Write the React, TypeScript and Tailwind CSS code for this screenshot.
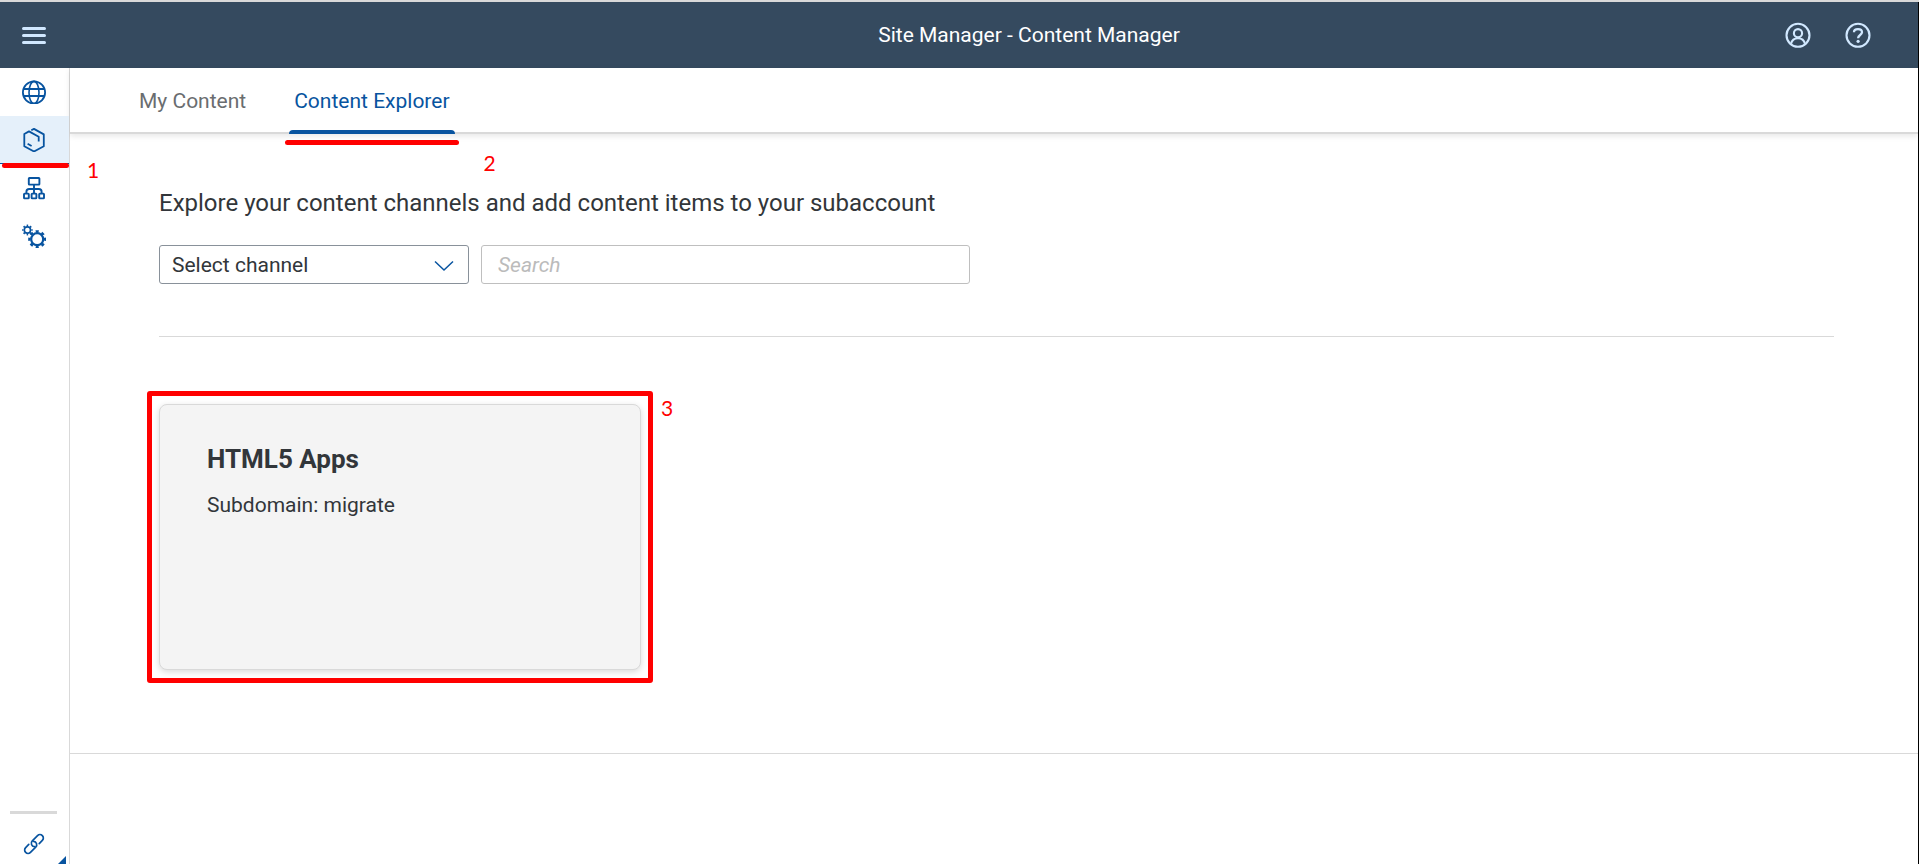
import React from "react";

type IconProps = { className?: string };

function GlobeIcon() {
  return (
    <svg viewBox="0 0 24 24" className="size-6" fill="none" stroke="currentColor" strokeWidth="1.8" aria-hidden="true">
      <circle cx="12" cy="12.5" r="11.1" />
      <ellipse cx="12" cy="12.5" rx="5" ry="11.1" strokeWidth="1.6" />
      <path d="M1.5 9h21M1.5 16h21" strokeWidth="2" />
    </svg>
  );
}

function ProductIcon() {
  return (
    <svg viewBox="0 0 24 24" className="size-6" fill="none" stroke="currentColor" strokeWidth="1.8" strokeLinejoin="round" aria-hidden="true">
      <path d="M9.3 2.3 12 .9l9.8 5.5v11.8L12 23.500l-9.700-5.300V6L7 3.400l9.700 5.400V13.600M5.600 15.800l4 2.200" />
    </svg>
  );
}

function HierarchyIcon() {
  return (
    <svg viewBox="0 0 24 24" className="size-6" fill="none" stroke="currentColor" strokeWidth="1.9" strokeLinejoin="round" aria-hidden="true">
      <rect x="6.800" y="2" width="10.600" height="6.600" rx=".6" />
      <path d="M12 8.600V18M4.400 18v-2.200c0-1.800 1-2.800 2.800-2.800h9.600c1.800 0 2.800 1 2.800 2.800V18" />
      <rect x="2" y="17.600" width="4.800" height="4.800" rx=".6" />
      <rect x="9.600" y="17.600" width="4.800" height="4.800" rx=".6" />
      <rect x="17.200" y="17.600" width="4.800" height="4.800" rx=".6" />
    </svg>
  );
}

function GearsIcon() {
  return (
    <svg viewBox="0 0 24 24" className="size-6" fill="none" stroke="currentColor" aria-hidden="true">
      <circle cx="5.400" cy="6" r="3.100" strokeWidth="1.600" />
      <circle cx="5.400" cy="6" r="4.500" strokeWidth="1.800" pathLength="80" strokeDasharray="4.400 5.600" strokeDashoffset="2.200" />
      <circle cx="15.200" cy="15.200" r="6" strokeWidth="2.200" />
      <circle cx="15.200" cy="15.200" r="7.800" strokeWidth="2.400" pathLength="80" strokeDasharray="5 5" strokeDashoffset="2.500" />
    </svg>
  );
}

function ChainIcon() {
  return (
    <svg viewBox="0 0 24 24" className="size-6" fill="none" stroke="currentColor" strokeWidth="1.700" strokeLinecap="round" aria-hidden="true">
      <g transform="translate(12 12) rotate(-45)">
        <path d="M4 3.400H8.400a3.400 3.400 0 0 0 0-6.800H1a3.400 3.400 0 0 0-2.600 5.600" />
        <path d="M-4-3.400H-8.400a3.400 3.400 0 0 0 0 6.800H-1a3.400 3.400 0 0 0 2.600-5.600" />
      </g>
    </svg>
  );
}

function MenuIcon() {
  return (
    <svg viewBox="0 0 24 24" className="size-6" stroke="currentColor" strokeWidth="3" strokeLinecap="round" aria-hidden="true">
      <path d="M1.5 5.5h21M1.5 12.5h21M1.5 19.5h21" />
    </svg>
  );
}

function UserIcon() {
  return (
    <svg viewBox="0 0 26 26" className="size-[26px]" fill="none" stroke="currentColor" strokeWidth="2.100" aria-hidden="true">
      <circle cx="13" cy="13.300" r="11.500" />
      <circle cx="13" cy="11.200" r="4.100" />
      <path d="M6 21.800c.8-3.400 3.300-5.600 7-5.600s6.200 2.200 7 5.600" />
    </svg>
  );
}

function HelpIcon() {
  return (
    <svg viewBox="0 0 26 26" className="size-[26px]" fill="none" stroke="currentColor" strokeWidth="2.100" aria-hidden="true">
      <circle cx="13" cy="13.300" r="11.500" />
      <path d="M9 10.200C9 8.300 10.600 7.200 13 7.200s4 1.200 4 3.100c0 2.600-3.900 2.900-3.900 5.900" strokeWidth="2.300" />
      <circle cx="13.100" cy="19.300" r="1.600" fill="currentColor" stroke="none" />
    </svg>
  );
}

function ChevronIcon({ className }: IconProps) {
  return (
    <svg viewBox="0 0 20 12" className={className} fill="none" stroke="currentColor" strokeWidth="1.500" aria-hidden="true">
      <path d="M1 1.500l9 8.500 9-8.500" />
    </svg>
  );
}

const navItems = [
  { label: "Site Directory", icon: <GlobeIcon /> },
  { label: "Content Manager", icon: <ProductIcon />, active: true },
  { label: "Channel Manager", icon: <HierarchyIcon /> },
  { label: "Settings", icon: <GearsIcon /> },
];

function Step({ n, className }: { n: number; className: string }) {
  return (
    <span className={`absolute font-[Lato,sans-serif] text-[21px] leading-6 text-[#ff0000] ${className}`}>{n}</span>
  );
}

function Header() {
  return (
    <header className="flex h-[66px] items-center bg-[#354a5f] text-[#d1e8ff]">
      <div className="w-[140px] shrink-0 pl-[22px]">
        <button type="button" aria-label="Toggle navigation" className="block">
          <MenuIcon />
        </button>
      </div>
      <div className="grid flex-1 grid-cols-[1fr_auto_1fr] items-center">
        <h1 className="col-start-2 text-[21px] leading-7 text-white">Site Manager - Content Manager</h1>
        <div className="flex justify-end gap-[34px] pr-[47px]">
          <button type="button" aria-label="User"><UserIcon /></button>
          <button type="button" aria-label="Help"><HelpIcon /></button>
        </div>
      </div>
    </header>
  );
}

function Sidebar() {
  return (
    <nav aria-label="Main" className="flex w-[70px] shrink-0 flex-col border-r border-[#d9d9d9] text-[#0854a0]">
      <ul>
        {navItems.map((item) => (
          <li key={item.label} className="relative">
            <a
              href="#"
              aria-label={item.label}
              className={
                item.active
                  ? "flex h-12 items-center border-b border-[#0854a0] bg-[#e5f0fa] pl-[22px]"
                  : "flex h-12 items-center pl-[22px]"
              }
            >
              {item.icon}
            </a>
            {item.active && (
              <>
                <span className="absolute top-[47px] right-0 left-0.5 z-10 h-[5px] rounded-full bg-[#ff0000]" />
                <Step n={1} className="top-[42px] left-[87px]" />
              </>
            )}
          </li>
        ))}
      </ul>
      <div className="relative mt-auto pb-2 pl-[22px]">
        <hr className="mb-[18px] -ml-3 h-[3px] w-[47px] border-0 bg-[#d9d9d9]" />
        <a href="#" aria-label="Useful links" className="block"><ChainIcon /></a>
        <svg viewBox="0 0 8 8" className="absolute right-[3px] bottom-0 size-2" fill="currentColor" aria-hidden="true">
          <path d="M8 0v8H0z" />
        </svg>
      </div>
    </nav>
  );
}

function Tabs() {
  return (
    <div role="tablist" className="flex h-[66px] gap-[38px] border-b-2 border-[#d9d9d9] pl-16 text-[21px] leading-7 shadow-[0_2px_6px_rgba(0,0,0,0.1)]">
      <button type="button" role="tab" aria-selected="false" className="px-[5px] pt-0.5 text-[#6a6d70]">My Content</button>
      <button type="button" role="tab" aria-selected="true" className="relative px-[5px] pt-0.5 text-[#0854a0]">
        Content Explorer
        <span className="absolute inset-x-0 -bottom-0.5 h-1 rounded-t-sm bg-[#0854a0]" />
        <span className="absolute -inset-x-1 -bottom-[13px] h-[5px] rounded-full bg-[#ff0000]" />
        <Step n={2} className="-bottom-[43px] left-full ml-[29px]" />
      </button>
    </div>
  );
}

export default function App() {
  return (
    <div className="flex min-h-screen flex-col border-t-2 border-[#d9d9d9] bg-white font-[Roboto,sans-serif] text-[#32363a]">
      <div className="flex flex-1 flex-col border-r border-black">
        <Header />
        <div className="flex flex-1">
          <Sidebar />
          <div className="min-w-0 flex-1">
            <Tabs />
            <main className="border-b border-[#d9d9d9] pt-[53px] pr-[84px] pb-[83px] pl-[89px]">
              <h2 className="text-2xl">Explore your content channels and add content items to your subaccount</h2>
              <form className="mt-[26px] flex gap-3 border-b border-[#d9d9d9] pb-[52px]">
                <div className="relative w-[310px]">
                  <select
                    aria-label="Select channel"
                    className="h-[39px] w-full appearance-none rounded-[3px] border border-[#89919a] bg-white px-3 text-[21px] leading-7"
                  >
                    <option>Select channel</option>
                  </select>
                  <ChevronIcon className="pointer-events-none absolute top-[15px] right-[15px] h-3 w-5 text-[#0854a0]" />
                </div>
                <input
                  type="search"
                  aria-label="Search"
                  placeholder="Search"
                  className="h-[39px] w-[489px] rounded-[3px] border border-[#bfbfbf] bg-white px-4 text-[21px] leading-7 placeholder:text-[#bbbbbb] placeholder:italic"
                />
              </form>
              <section className="relative mt-[67px] w-[482px]">
                <a
                  href="#"
                  className="block h-[266px] rounded-lg border border-[#d9d9d9] bg-[#f4f4f4] px-[47px] pt-[38px] shadow-[0_2px_6px_rgba(0,0,0,0.15)]"
                >
                  <h3 className="text-[26px] leading-8 font-bold">HTML5 Apps</h3>
                  <p className="mt-4 text-[21px] leading-7">Subdomain: migrate</p>
                </a>
                <span className="pointer-events-none absolute -inset-x-[12px] -inset-y-[13px] rounded-[3px] border-[5px] border-[#ff0000]" />
                <Step n={3} className="-top-2 left-full ml-5" />
              </section>
            </main>
          </div>
        </div>
      </div>
    </div>
  );
}
